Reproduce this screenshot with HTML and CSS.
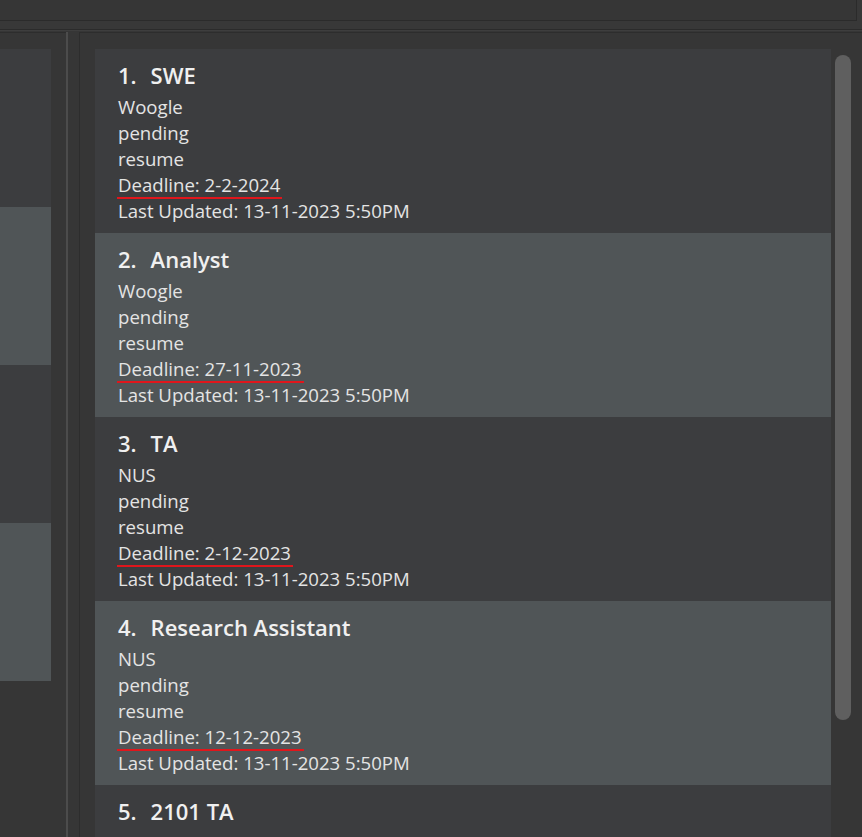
FILE: index.html
```html
<!DOCTYPE html>
<html>
<head>
<meta charset="utf-8">
<link rel="stylesheet" href="styles.css">
</head>
<body>
<div class="top">
  <div class="topbox"></div>
</div>
<div class="band"></div>
<div class="main">
  <div class="left">
    <div class="lcard dark"></div>
    <div class="lcard light"></div>
    <div class="lcard dark"></div>
    <div class="lcard light"></div>
  </div>
  <div class="divider"></div>
  <div class="right">
    <div class="list">
      <div class="card dark">
        <div class="title"><span class="idx">1.</span>SWE</div>
        <div class="line">Woogle</div>
        <div class="line">pending</div>
        <div class="line">resume</div>
        <div class="line"><span class="deadline">Deadline: 2-2-2024</span></div>
        <div class="line">Last Updated: 13-11-2023 5:50PM</div>
      </div>
      <div class="card light">
        <div class="title"><span class="idx">2.</span>Analyst</div>
        <div class="line">Woogle</div>
        <div class="line">pending</div>
        <div class="line">resume</div>
        <div class="line"><span class="deadline">Deadline: 27-11-2023</span></div>
        <div class="line">Last Updated: 13-11-2023 5:50PM</div>
      </div>
      <div class="card dark">
        <div class="title"><span class="idx">3.</span>TA</div>
        <div class="line">NUS</div>
        <div class="line">pending</div>
        <div class="line">resume</div>
        <div class="line"><span class="deadline">Deadline: 2-12-2023</span></div>
        <div class="line">Last Updated: 13-11-2023 5:50PM</div>
      </div>
      <div class="card light">
        <div class="title"><span class="idx">4.</span>Research Assistant</div>
        <div class="line">NUS</div>
        <div class="line">pending</div>
        <div class="line">resume</div>
        <div class="line"><span class="deadline">Deadline: 12-12-2023</span></div>
        <div class="line">Last Updated: 13-11-2023 5:50PM</div>
      </div>
      <div class="card dark last">
        <div class="title"><span class="idx">5.</span>2101 TA</div>
      </div>
    </div>
    <div class="scroll"><div class="thumb"></div></div>
  </div>
</div>
</body>
</html>
```
FILE: styles.css
```css
html, body {
  margin: 0;
  padding: 0;
}
body {
  width: 862px;
  height: 837px;
  overflow: hidden;
  background: #363636;
  font-family: "Open Sans", "Noto Sans", sans-serif;
  color: #e4e4e4;
}
.top {
  height: 21px;
  display: flex;
  background: #383838;
}
.topbox {
  width: 856px;
  height: 20px;
  background: #363636;
  border-right: 1px solid #2b2b2b;
  border-bottom: 1px solid #2b2b2b;
}
.band {
  height: 8px;
  background: #383838;
  border-bottom: 1px solid #2b2b2b;
  box-shadow: 0 1px 0 #3e3e3e;
}
.main {
  display: flex;
  margin-top: 2px;
  height: 805px;
}
.left {
  width: 66px;
  border-top: 1px solid #2d2d2d;
  padding-top: 16px;
  box-sizing: border-box;
}
.lcard {
  width: 51px;
  height: 158px;
}
.dark { background: #3c3d3f; }
.light { background: #505557; }
.divider {
  width: 2px;
  background: #4c4c4c;
}
.right {
  flex: 1;
  display: flex;
  margin-left: 11px;
  border-left: 1px solid #2d2d2d;
  border-top: 1px solid #2d2d2d;
  padding: 16px 0 0 15px;
}
.list {
  width: 736px;
  flex: none;
}
.card {
  height: 184px;
  box-sizing: border-box;
  padding: 11px 0 8px 23px;
  overflow: hidden;
}
.card.last {
  height: 60px;
}
.title {
  font-size: 22px;
  font-weight: 600;
  line-height: 30px;
  margin-bottom: 4px;
  color: #f0f0f0;
}
.idx {
  margin-right: 14px;
}
.line {
  font-size: 18.6px;
  line-height: 26px;
  white-space: nowrap;
}
.deadline {
  border-bottom: 2px solid #e0161c;
  margin-left: -1px;
  padding: 0 2px 0 1px;
}
.scroll {
  width: 16px;
  margin-left: 4px;
  padding-top: 6px;
}
.thumb {
  height: 665px;
  background: #5f5f5f;
  border-radius: 8px;
}
```
